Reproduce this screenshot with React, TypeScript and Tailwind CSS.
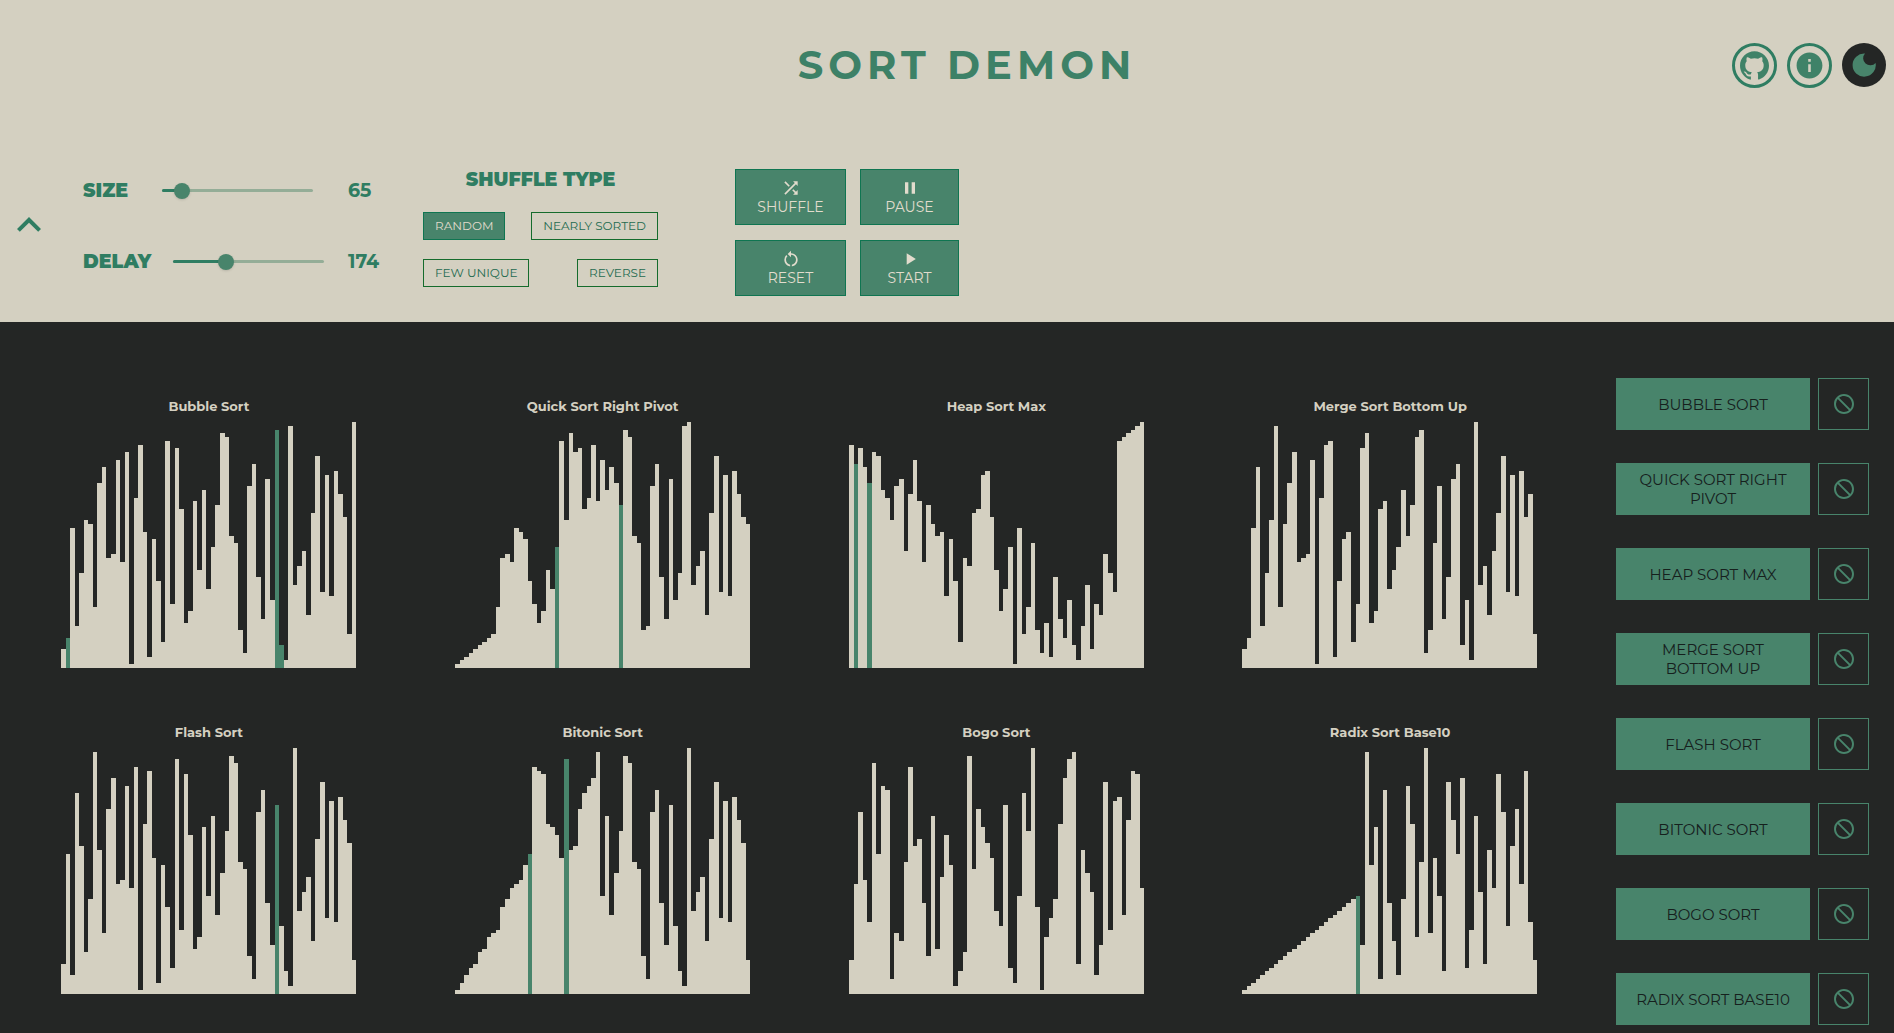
import { useState } from "react";
import type { ReactNode } from "react";
import { MdBlock, MdExpandLess, MdInfo, MdPause, MdPlayArrow, MdRestartAlt, MdShuffle } from "react-icons/md";
import { SiGithub } from "react-icons/si";

type Algorithm = { name: string; values: number[]; active: number[] };

const ALGORITHMS: Algorithm[] = [
  {
    name: "Bubble Sort",
    values: [5, 8, 37, 11, 25, 39, 38, 16, 49, 53, 29, 30, 55, 28, 57, 1, 45, 59, 36, 3, 34, 23, 7, 60, 17, 58, 42, 12, 15, 44, 26, 47, 21, 32, 43, 62, 61, 35, 33, 10, 4, 48, 54, 24, 13, 50, 18, 63, 6, 2, 64, 22, 27, 31, 14, 41, 56, 20, 51, 19, 52, 46, 40, 9, 65],
    active: [1, 47, 48],
  },
  {
    name: "Quick Sort Right Pivot",
    values: [1, 2, 3, 4, 5, 6, 7, 8, 9, 16, 29, 30, 28, 37, 36, 34, 23, 17, 12, 15, 26, 21, 32, 60, 39, 62, 57, 58, 42, 45, 59, 44, 55, 47, 53, 49, 43, 63, 61, 35, 33, 10, 11, 48, 54, 24, 13, 50, 18, 25, 64, 65, 22, 27, 31, 14, 41, 56, 20, 51, 19, 52, 46, 40, 38],
    active: [22, 36],
  },
  {
    name: "Heap Sort Max",
    values: [59, 54, 58, 53, 49, 57, 56, 47, 45, 39, 48, 50, 31, 46, 55, 44, 28, 43, 38, 35, 36, 19, 34, 23, 7, 29, 27, 41, 42, 51, 52, 40, 26, 15, 21, 32, 1, 37, 9, 16, 33, 10, 4, 12, 3, 24, 13, 8, 18, 6, 2, 11, 22, 5, 17, 14, 30, 25, 20, 60, 61, 62, 63, 64, 65],
    active: [1, 4],
  },
  {
    name: "Merge Sort Bottom Up",
    values: [5, 8, 37, 53, 11, 25, 39, 64, 16, 38, 49, 57, 28, 29, 30, 55, 1, 45, 59, 60, 3, 23, 34, 36, 7, 17, 58, 62, 12, 15, 42, 44, 21, 26, 32, 47, 35, 43, 61, 63, 4, 10, 33, 48, 13, 24, 50, 54, 6, 18, 2, 65, 22, 27, 14, 31, 41, 56, 20, 51, 19, 52, 40, 46, 9],
    active: [],
  },
  {
    name: "Flash Sort",
    values: [8, 37, 5, 53, 39, 11, 25, 64, 38, 16, 49, 57, 29, 30, 55, 28, 60, 1, 45, 59, 36, 3, 34, 23, 7, 62, 17, 58, 42, 12, 15, 44, 26, 47, 21, 32, 43, 63, 61, 35, 33, 10, 4, 48, 54, 24, 13, 50, 18, 6, 2, 65, 22, 27, 31, 14, 41, 56, 20, 51, 19, 52, 46, 40, 9],
    active: [47],
  },
  {
    name: "Bitonic Sort",
    values: [1, 3, 5, 7, 8, 11, 12, 15, 16, 17, 23, 25, 28, 29, 30, 34, 37, 60, 59, 58, 45, 44, 42, 36, 62, 38, 39, 49, 53, 55, 57, 64, 26, 47, 21, 32, 43, 63, 61, 35, 33, 10, 4, 48, 54, 24, 13, 50, 18, 6, 2, 65, 22, 27, 31, 14, 41, 56, 20, 51, 19, 52, 46, 40, 9],
    active: [16, 24],
  },
  {
    name: "Bogo Sort",
    values: [9, 29, 48, 30, 19, 61, 37, 55, 54, 4, 16, 14, 35, 60, 39, 41, 24, 10, 47, 12, 31, 42, 34, 2, 6, 11, 63, 33, 49, 44, 40, 36, 22, 18, 50, 7, 3, 26, 53, 43, 65, 23, 1, 15, 20, 25, 45, 57, 62, 64, 8, 38, 32, 27, 5, 13, 56, 17, 51, 52, 21, 46, 59, 58, 28],
    active: [],
  },
  {
    name: "Radix Sort Base10",
    values: [1, 2, 3, 4, 5, 6, 7, 8, 9, 10, 11, 12, 13, 14, 15, 16, 17, 18, 19, 20, 21, 22, 23, 24, 25, 26, 13, 64, 34, 44, 4, 54, 24, 14, 5, 25, 55, 45, 15, 35, 65, 16, 36, 26, 6, 56, 46, 37, 57, 7, 17, 47, 27, 8, 38, 28, 58, 48, 18, 39, 49, 29, 59, 19, 9],
    active: [25],
  },
];

const MAX = 500;

function Slider({ id, label, value, onChange, gap }: { id: string; label: string; value: number; onChange: (v: number) => void; gap: string }) {
  const percent = (value / MAX) * 100;
  return (
    <div className="flex h-6 items-center">
      <div className={`flex w-[265px] shrink-0 items-center ${gap}`}>
        <label htmlFor={id} className="text-[19px] font-black leading-6">
          {label}
        </label>
        <div className="relative h-4 w-[151px]">
          <div className="absolute inset-x-0 top-[6px] h-[3px] rounded-full bg-[#94ad97]" />
          <div className="absolute left-0 top-[6px] h-[3px] rounded-full bg-[#2f7d62]" style={{ width: `${percent}%` }} />
          <input
            id={id}
            type="range"
            min={0}
            max={MAX}
            value={value}
            onChange={(e) => onChange(Number(e.target.value))}
            className="absolute -left-2 top-0 h-4 w-[167px] cursor-pointer appearance-none bg-transparent [&::-webkit-slider-thumb]:size-4 [&::-webkit-slider-thumb]:appearance-none [&::-webkit-slider-thumb]:rounded-full [&::-webkit-slider-thumb]:bg-[#48846b] [&::-webkit-slider-thumb]:shadow-sm"
          />
        </div>
      </div>
      <output htmlFor={id} className="text-[19px] font-bold leading-6">
        {value}
      </output>
    </div>
  );
}

function ActionButton({ icon, children }: { icon: ReactNode; children: ReactNode }) {
  return (
    <button className="flex h-14 flex-col items-center justify-center border border-[#0f7551] bg-[#48846b] text-[14px] leading-[18px] text-[#e2dccd]">
      {icon}
      {children}
    </button>
  );
}

function ShuffleType({ selected, children, onSelect }: { selected: boolean; children: string; onSelect: () => void }) {
  return (
    <button
      onClick={onSelect}
      aria-pressed={selected}
      className={
        selected
          ? "h-7 border border-[#0f7551] bg-[#48846b] px-[11px] text-[12px] text-[#e2dccd]"
          : "h-7 border border-[#156b2c] px-[11px] text-[12px] text-[#1f6b50]"
      }
    >
      {children}
    </button>
  );
}

function MoonIcon() {
  return (
    <svg viewBox="0 0 24 24" className="size-6" fill="currentColor" aria-hidden="true">
      <path d="M13 0.5A11.6 11.6 0 1 0 23.6 10A7.1 7.1 0 0 1 13 0.5Z" />
    </svg>
  );
}

function Chart({ name, values, active }: Algorithm) {
  return (
    <figure className="flex flex-col items-center">
      <figcaption className="text-[13px] font-bold leading-8">{name}</figcaption>
      <svg viewBox="0 0 65 65" preserveAspectRatio="none" shapeRendering="crispEdges" className="h-[246px] w-3/4" role="img" aria-label={name}>
        {values.map((v, i) => (
          <rect key={i} x={i} y={65 - v} width={1} height={v} fill={active.includes(i) ? "#48846b" : "#d4d0c1"} />
        ))}
      </svg>
    </figure>
  );
}

export default function App() {
  const [size, setSize] = useState(65);
  const [delay, setDelay] = useState(174);
  const [shuffle, setShuffle] = useState("RANDOM");
  const pick = (name: string) => ({ selected: shuffle === name, onSelect: () => setShuffle(name), children: name });

  return (
    <div className="h-screen overflow-hidden bg-[#242625] font-['Montserrat','Inter',sans-serif] text-[#d4d0c1]">
      <header className="bg-[#d4d0c1] pb-[26px] text-[#2f7d62]">
        <div className="grid grid-cols-[1fr_auto_1fr] items-center pb-6 pt-10">
          <h1 className="col-start-2 pl-10 text-[40px] font-bold leading-[50px] tracking-[5px] text-[#3d8167]">SORT DEMON</h1>
          <nav className="flex items-center justify-end gap-[10px] pr-2 text-[#3f8268]">
            <a href="#github" aria-label="GitHub" className="flex size-[45px] items-center justify-center rounded-full border-3 border-[#2f7d62]">
              <SiGithub size={29} />
            </a>
            <a href="#about" aria-label="About" className="flex size-[45px] items-center justify-center rounded-full border-3 border-[#2f7d62]">
              <MdInfo size={31} />
            </a>
            <button aria-label="Toggle dark mode" className="flex size-11 items-center justify-center rounded-full bg-[#242625] text-[#48846b]">
              <MoonIcon />
            </button>
          </nav>
        </div>

        <div className="flex items-start pl-[5px] pt-[53px]">
          <button aria-label="Collapse controls" className="mr-[30px] pt-[34px]">
            <MdExpandLess size={48} />
          </button>
          <div className="flex w-[340px] flex-col gap-[47px] pt-3">
            <Slider id="size" label="SIZE" value={size} onChange={setSize} gap="gap-[34px]" />
            <Slider id="delay" label="DELAY" value={delay} onChange={setDelay} gap="gap-[22px]" />
          </div>
          <fieldset className="flex w-[235px] flex-col">
            <legend className="mx-auto mb-5 pt-px text-[19px] font-black leading-6">SHUFFLE TYPE</legend>
            <div className="flex justify-between">
              <ShuffleType {...pick("RANDOM")} />
              <ShuffleType {...pick("NEARLY SORTED")} />
            </div>
            <div className="mt-[19px] flex justify-between">
              <ShuffleType {...pick("FEW UNIQUE")} />
              <ShuffleType {...pick("REVERSE")} />
            </div>
          </fieldset>
          <div className="ml-[77px] grid grid-cols-[111px_99px] gap-x-[14px] gap-y-[15px] pt-0.5">
            <ActionButton icon={<MdShuffle size={20} />}>SHUFFLE</ActionButton>
            <ActionButton icon={<MdPause size={20} />}>PAUSE</ActionButton>
            <ActionButton icon={<MdRestartAlt size={20} />}>RESET</ActionButton>
            <ActionButton icon={<MdPlayArrow size={20} />}>START</ActionButton>
          </div>
        </div>
      </header>

      <div className="flex items-start">
        <main className="grid flex-1 grid-cols-4 content-start gap-y-12 pl-3 pt-[68px]">
          {ALGORITHMS.map((a) => (
            <Chart key={a.name} {...a} />
          ))}
        </main>
        <aside className="flex flex-col gap-[33px] pl-[29px] pr-[25px] pt-14">
          {ALGORITHMS.map((a) => (
            <div key={a.name} className="flex gap-2">
              <button className="flex h-[52px] w-[194px] items-center justify-center bg-[#48846b] px-4 text-[15px] leading-[19px] text-[#16201d]">
                {a.name.toUpperCase()}
              </button>
              <button aria-label={`Disable ${a.name}`} className="flex h-[52px] w-[51px] items-center justify-center border border-[#48846b] text-[#48846b]">
                <MdBlock size={24} className="-scale-x-100" />
              </button>
            </div>
          ))}
        </aside>
      </div>
    </div>
  );
}
